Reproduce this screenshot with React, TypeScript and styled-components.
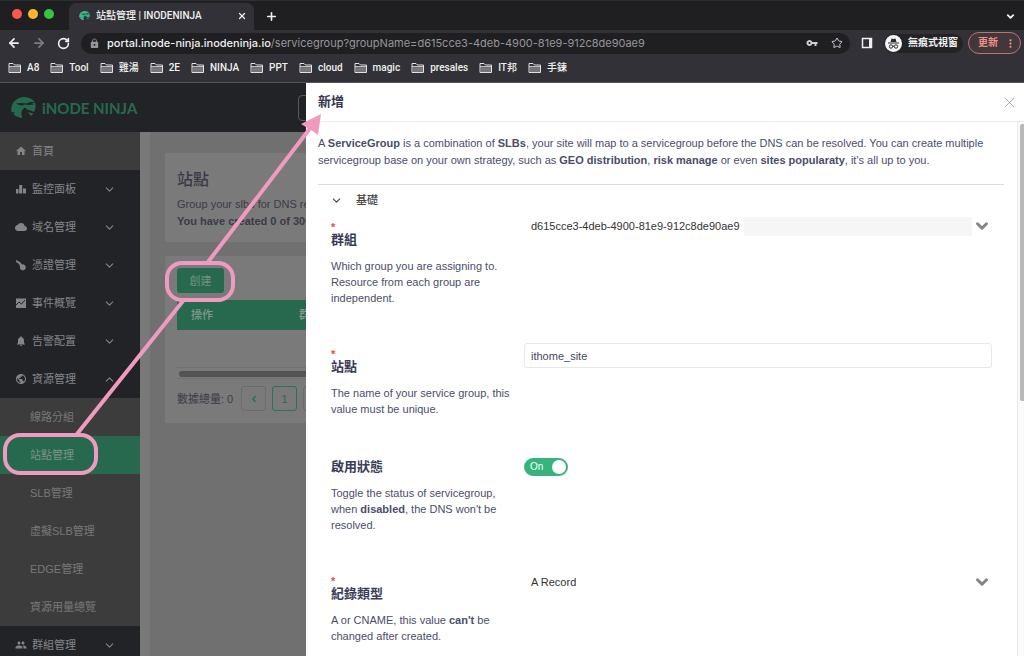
import React from "react";
import styled, { createGlobalStyle, css } from "styled-components";
import { ChevronDown, ChevronUp, ChevronLeft, X, Plus, ArrowLeft, ArrowRight, RotateCw, Star } from "lucide-react";
import {
  MdHome, MdCloud, MdVpnKey, MdNotifications, MdGroup, MdPublic, MdLock, MdMoreVert,
} from "react-icons/md";

const ui = `"Liberation Sans", "Noto Sans CJK TC", sans-serif`;
const chromeFont = `Roboto, "Noto Sans CJK TC", sans-serif`;
const ink = "#4b4d6b";
const pink = "#f19abf";
const green = "#27694f";

const Global = createGlobalStyle`
  * { box-sizing: border-box; }
  body { margin: 0; background: #fff; font: 11px/16px ${ui}; overflow: hidden; }
  button, input, select { font: inherit; color: inherit; margin: 0; padding: 0; border: 0; background: none; }
  a { color: inherit; text-decoration: none; }
  h1, h2, p { margin: 0; }
  svg { display: block; flex: none; }
`;

const Window = styled.div`
  position: relative;
  display: flex;
  flex-direction: column;
  height: calc(100vh - 5px);
  overflow: hidden;
`;

/* Browser chrome */
const TabStrip = styled.div`
  display: flex;
  align-items: center;
  height: 30px;
  padding: 2px 8px 0 12px;
  background: #1f1f21;
  border-top: 1px solid #2e2e30;
  color: #f0f0f0;
  font-family: ${chromeFont};
`;
const Lights = styled.div`
  display: flex;
  gap: 6px;
  width: 57px;
  padding-bottom: 6px;
`;
const Light = styled.span<{ $color: string }>`
  width: 10px;
  height: 10px;
  border-radius: 50%;
  background: ${(p) => p.$color};
`;
const Tab = styled.div`
  display: flex;
  align-items: center;
  align-self: stretch;
  width: 185px;
  padding: 0 7px 2px 10px;
  border-radius: 7px 7px 0 0;
  background: #323137;
  font-size: 10px;
  font-weight: 500;
`;
const TabTitle = styled.span`
  flex: 1;
  padding-left: 6px;
  white-space: nowrap;
`;
const IconButton = styled.button<{ $dim?: boolean }>`
  display: flex;
  align-items: center;
  justify-content: center;
  color: ${(p) => (p.$dim ? "#7c7c80" : "#f0f0f0")};
`;
const NewTab = styled(IconButton)`
  margin: 0 auto 0 11px;
`;
const Toolbar = styled.div`
  display: flex;
  align-items: center;
  height: 26px;
  padding: 0 3px 0 7px;
  gap: 11px;
  background: #323137;
  color: #f0f0f0;
  font-family: ${chromeFont};
`;
const Address = styled.div`
  display: flex;
  flex: 1;
  align-items: center;
  height: 21px;
  padding: 0 7px 0 8px;
  border-radius: 11px;
  background: #1f1f21;
`;
const Url = styled.span`
  flex: 1;
  padding-left: 7px;
  color: #96969a;
  font-family: Inter, sans-serif;
  white-space: nowrap;
  b { color: #f0f0f0; font-weight: 500; }
`;
const AddressIcons = styled.div`
  display: flex;
  align-items: center;
  gap: 13px;
  color: #d0d0d2;
`;
const Incognito = styled.div`
  display: flex;
  align-items: center;
  gap: 6px;
  height: 19px;
  padding: 0 5px 0 1px;
  border-radius: 10px;
  background: #232326;
  font-size: 10px;
  font-weight: 700;
`;
const Update = styled.button`
  display: flex;
  align-items: center;
  gap: 6px;
  height: 22px;
  margin-left: -6px;
  padding: 0 3px 0 9px;
  border: 1px solid #b87572;
  border-radius: 11px;
  background: #42373c;
  color: #ef8f88;
  font-size: 10px;
  font-weight: 700;
`;
const Bookmarks = styled.nav`
  display: flex;
  align-items: center;
  gap: 11px;
  height: 27px;
  padding: 0 8px 3px;
  border-bottom: 1px solid #57575b;
  background: #323137;
  color: #f0f0f0;
  font: 500 10px/16px ${chromeFont};
`;
const Bookmark = styled.a`
  display: flex;
  align-items: center;
  gap: 5px;
`;

/* Portal behind the drawer */
const Portal = styled.div`
  position: relative;
  display: flex;
  flex: 1;
  flex-direction: column;
  min-height: 0;
`;
const PortalHeader = styled.header`
  display: flex;
  align-items: center;
  height: 49px;
  padding-left: 11px;
  background: #222327;
`;
const Brand = styled.a`
  display: flex;
  flex: none;
  align-items: center;
  gap: 6px;
  width: 287px;
  color: ${green};
  font: 700 15px/20px Lato, sans-serif;
`;
const HeaderButton = styled.button`
  width: 80px;
  height: 26px;
  border: 1px solid #58595c;
  border-radius: 4px;
`;
const Columns = styled.div`
  display: flex;
  flex: 1;
  min-height: 0;
`;
const Sidebar = styled.nav`
  width: 140px;
  flex: none;
  background: #222327;
  color: #848587;
  overflow: hidden;
`;
const MenuItem = styled.a<{ $top?: boolean }>`
  display: flex;
  align-items: center;
  gap: 5px;
  height: 38px;
  padding: 0 24px 0 15px;
  ${(p) => p.$top && css`background: #3c3c3c;`}
  span { flex: 1; }
`;
const SubItem = styled.a<{ $active?: boolean }>`
  display: flex;
  align-items: center;
  height: 38px;
  padding-left: 30px;
  background: ${(p) => (p.$active ? green : "#3c3c3c")};
  color: ${(p) => (p.$active ? "#7d9488" : "#787878")};
`;
const Main = styled.main`
  display: flex;
  flex: 1;
  flex-direction: column;
  gap: 14px;
  min-width: 0;
  padding: 21px 15px;
  border-left: 10px solid #797979;
  background: #707070;
  color: #3a3b48;
`;
const Card = styled.section`
  padding: 12px;
  border-radius: 2px;
  background: #7a7a7a;
`;
const IntroCard = styled(Card)`
  height: 89px;
  padding-top: 16px;
  h1 { margin-bottom: 5px; font-size: 16px; line-height: 22px; font-weight: 500; }
  p { line-height: 17px; white-space: nowrap; }
`;
const Create = styled.button`
  display: block;
  width: 47px;
  height: 25px;
  margin-bottom: 7px;
  border-radius: 3px;
  background: ${green};
  color: #72917f;
`;
const Table = styled.table`
  width: 100%;
  border-collapse: collapse;
  th {
    height: 30px;
    padding: 0 14px;
    background: ${green};
    color: #84998d;
    font-weight: 500;
    text-align: left;
  }
  th:first-child { width: 108px; }
  td { height: 37px; }
`;
const HScroll = styled.div`
  height: 12px;
  padding: 3px 2px;
  border: solid #717171;
  border-width: 1px 0;
  &::after { content: ""; display: block; height: 6px; border-radius: 3px; background: #535353; }
`;
const Pager = styled.div`
  display: flex;
  align-items: center;
  gap: 6px;
  margin-top: 7px;
  span { width: 58px; }
`;
const PageButton = styled.button<{ $current?: boolean }>`
  display: flex;
  align-items: center;
  justify-content: center;
  width: 25px;
  height: 25px;
  border: 1px solid ${(p) => (p.$current ? "#2d7257" : "#6b6b6b")};
  border-radius: 3px;
  color: #2d6951;
`;

/* Drawer */
const Drawer = styled.aside`
  position: absolute;
  inset: 0 0 0 306px;
  display: flex;
  flex-direction: column;
  background: #fff;
  color: ${ink};
`;
const DrawerHeader = styled.header`
  display: flex;
  align-items: center;
  justify-content: space-between;
  height: 39px;
  padding: 0 6px 0 12px;
  border-bottom: 1px solid #ececec;
  h2 { color: #34364f; font-size: 13px; font-weight: 700; }
`;
const DrawerBody = styled.div`
  display: flex;
  flex: 1;
  min-height: 0;
`;
const Content = styled.div`
  flex: 1;
  min-width: 0;
  padding: 13px 13px 0 12px;
  overflow: hidden;
`;
const Lead = styled.p`
  padding-bottom: 15px;
  border-bottom: 1px solid #dcdce0;
  line-height: 17px;
`;
const SectionToggle = styled.button`
  display: flex;
  align-items: center;
  gap: 13px;
  height: 30px;
  margin-bottom: 3px;
  padding-left: 12px;
  color: #444;
  font-weight: 500;
`;
const Row = styled.div`
  display: flex;
  padding: 0 12px 39px 13px;
`;
const Caption = styled.div`
  width: 193px;
  flex: none;
  padding: 3px 10px 0 0;
  label { display: block; margin-bottom: 10px; color: #3a3c58; font-size: 13px; font-weight: 700; }
`;
const Required = styled.span`
  display: block;
  height: 11px;
  color: #f04a2c;
  font-weight: 700;
  line-height: 12px;
`;
const Field = styled.div`
  flex: 1;
  min-width: 0;
`;
const SelectBox = styled.div<{ $low?: boolean }>`
  display: flex;
  align-items: center;
  height: 20px;
  margin-top: ${(p) => (p.$low ? "0" : "-2px")};
  padding: 0 1px 0 7px;
  color: #858585;
`;
const Select = styled.select`
  appearance: none;
  field-sizing: content;
  flex: none;
  color: #333;
`;
const Filler = styled.span<{ $shade?: boolean }>`
  flex: 1;
  height: 19px;
  margin: 0 1px 0 4px;
  background: ${(p) => (p.$shade ? "#f6f6f6" : "transparent")};
`;
const TextInput = styled.input`
  display: block;
  width: 100%;
  height: 25px;
  margin-top: -2px;
  padding: 0 6px;
  border: 1px solid #e8e8ea;
  border-radius: 3px;
  color: #45475f;
`;
const Switch = styled.label`
  display: flex;
  align-items: center;
  justify-content: space-between;
  width: 44px;
  height: 18px;
  margin-top: 2px;
  padding: 0 2px 0 6px;
  border-radius: 9px;
  background: #36b47b;
  color: #fff;
  font-size: 10px;
  input {
    appearance: none;
    width: 14px;
    height: 14px;
    border-radius: 50%;
    background: #fff;
  }
`;
const Scrollbar = styled.div`
  width: 7px;
  padding: 2px 0 0 2px;
  border-left: 1px solid #e9e9e9;
  background: #fafafa;
  &::after { content: ""; display: block; height: 52%; border-radius: 2px 0 0 2px; background: #b9b9b9; }
`;
const Annotation = styled.svg`
  position: absolute;
  top: 0;
  left: 0;
  pointer-events: none;
`;

const Folder = () => (
  <svg width="14" height="12" viewBox="0 0 14 12" fill="none" stroke="#e2e2e4">
    <path d="M1 10.5V1.5h4l1.5 1.5H12.5v7.5Z" />
    <path d="M2 5.500h10v4.500H2z" fill="#77777b" stroke="none" />
    <path d="M1 4.700h11.500" />
  </svg>
);
const NinjaMark = ({ width, color, cut }: { width: number; color: string; cut: string }) => (
  <svg width={width} height={(width * 21) / 25} viewBox="0 0 25 21">
    <path fill={color} d="M11.500 21C7 20.500 4 19 2.500 17L4 15.500.5 15C-1 7 5 0 13 0 20 0 25 4 24.500 10c-.2 2.500-1 4-2 5L20 13.500l-3-.5-3-2.500c-4 2.500-4.500 6-2.500 10.500Z" />
    <path fill={color} d="m17 15 5.500 1.500-2.500 2.500Z" />
    <path fill={cut} d="m5 6.500 5-.5 5 .5 5-1.500 4 .3-3 1.200 2 1-5 .5-4-.5-3 1-3-.5Z" />
  </svg>
);
const IncognitoMark = () => (
  <svg width="17" height="17" viewBox="0 0 17 17">
    <circle cx="8.500" cy="8.500" r="8.500" fill="#f5f5f5" />
    <path fill="#2b2b2e" d="M5.500 7 6.500 3.500l2 .5 2-.5 1 3.500ZM3 7.500h11v1H3z" />
    <g fill="none" stroke="#2b2b2e">
      <circle cx="6" cy="11.500" r="1.700" /><circle cx="11" cy="11.500" r="1.700" /><path d="M7.700 11.200h1.600" />
    </g>
  </svg>
);
const Bars = () => (
  <svg width="12" height="12" viewBox="0 0 12 12" fill="currentColor"><path d="M1 6h2.500v4.500H1zM4.200 2h3v8.500h-3zM8 5.500h3v5H8z" /></svg>
);
const Tool = () => (
  <svg width="12" height="12" viewBox="0 0 12 12" fill="currentColor"><path d="m1 1 4 2 2 2.500a3 3 0 1 1-2 2L4 5 1 3Z" /></svg>
);
const Chart = () => (
  <svg width="12" height="12" viewBox="0 0 12 12"><rect x="1" y="1.500" width="10" height="9.500" fill="currentColor" /><path d="m1 8 3-3 2.500 2L10 3" stroke="#222327" fill="none" /></svg>
);

const bookmarks = ["A8", "Tool", "雞湯", "2E", "NINJA", "PPT", "cloud", "magic", "presales", "IT邦", "手鍊"];
const menu = [
  { label: "監控面板", icon: <Bars /> },
  { label: "域名管理", icon: <MdCloud size={12} /> },
  { label: "憑證管理", icon: <Tool /> },
  { label: "事件概覽", icon: <Chart /> },
  { label: "告警配置", icon: <MdNotifications size={12} /> },
  { label: "資源管理", icon: <MdPublic size={12} />, open: true },
];
const resources = ["線路分組", "站點管理", "SLB管理", "虛擬SLB管理", "EDGE管理", "資源用量總覽"];

export default function App() {
  return (
    <>
      <Global />
      <Window>
        <TabStrip>
          <Lights>
            <Light $color="#fc5750" /><Light $color="#fdb52b" /><Light $color="#33c640" />
          </Lights>
          <Tab>
            <NinjaMark width={11} color="#35b887" cut="#323137" />
            <TabTitle>站點管理 | INODENINJA</TabTitle>
            <IconButton aria-label="Close tab"><X size={10} strokeWidth={3} /></IconButton>
          </Tab>
          <NewTab aria-label="New tab"><Plus size={13} strokeWidth={3} /></NewTab>
          <IconButton aria-label="Search tabs"><ChevronDown size={11} strokeWidth={4} /></IconButton>
        </TabStrip>
        <Toolbar>
          <IconButton aria-label="Back"><ArrowLeft size={14} strokeWidth={3} /></IconButton>
          <IconButton aria-label="Forward" $dim><ArrowRight size={14} strokeWidth={3} /></IconButton>
          <IconButton aria-label="Reload"><RotateCw size={13} strokeWidth={3} /></IconButton>
          <Address>
            <MdLock size={11} color="#96969a" />
            <Url><b>portal.inode-ninja.inodeninja.io</b>/servicegroup?groupName=d615cce3-4deb-4900-81e9-912c8de90ae9</Url>
            <AddressIcons><MdVpnKey size={12} /><Star size={12} /></AddressIcons>
          </Address>
          <svg width="12" height="12" viewBox="0 0 12 12"><path d="M1.500 1.500h9v9h-9z" fill="none" stroke="#f0f0f0" strokeWidth="1.500" /><path d="M8 1h3v10H8z" fill="#f0f0f0" /></svg>
          <Incognito><IncognitoMark />無痕式視窗</Incognito>
          <Update>更新<MdMoreVert size={13} /></Update>
        </Toolbar>
        <Bookmarks>
          {bookmarks.map((b) => <Bookmark href="#" key={b}><Folder />{b}</Bookmark>)}
        </Bookmarks>

        <Portal>
          <PortalHeader>
            <Brand href="#"><NinjaMark width={25} color={green} cut="#222327" />iNODE NINJA</Brand>
            <HeaderButton aria-label="Language" />
          </PortalHeader>
          <Columns>
            <Sidebar>
              <MenuItem href="#" $top><MdHome size={12} /><span>首頁</span></MenuItem>
              {menu.map((m) => (
                <MenuItem href="#" key={m.label}>
                  {m.icon}<span>{m.label}</span>
                  {m.open ? <ChevronUp size={13} /> : <ChevronDown size={13} />}
                </MenuItem>
              ))}
              {resources.map((r) => <SubItem href="#" key={r} $active={r === "站點管理"}>{r}</SubItem>)}
              <MenuItem href="#"><MdGroup size={12} /><span>群組管理</span><ChevronDown size={13} /></MenuItem>
            </Sidebar>
            <Main>
              <IntroCard>
                <h1>站點</h1>
                <p>Group your slbs for DNS resolving.</p>
                <p><b>You have created 0 of 300</b></p>
              </IntroCard>
              <Card>
                <Create>創建</Create>
                <Table>
                  <thead><tr><th>操作</th><th>群組</th></tr></thead>
                  <tbody><tr><td /><td /></tr></tbody>
                </Table>
                <HScroll />
                <Pager>
                  <span>數據總量: 0</span>
                  <PageButton aria-label="Previous"><ChevronLeft size={10} strokeWidth={3} /></PageButton>
                  <PageButton $current>1</PageButton>
                  <PageButton aria-label="Next" />
                </Pager>
              </Card>
            </Main>
          </Columns>

          <Drawer>
            <DrawerHeader>
              <h2>新增</h2>
              <IconButton aria-label="Close" $dim><X size={17} strokeWidth={1} color="#888" /></IconButton>
            </DrawerHeader>
            <DrawerBody>
              <Content>
                <Lead>
                  A <b>ServiceGroup</b> is a combination of <b>SLBs</b>, your site will map to a servicegroup before the DNS can be resolved. You can create multiple servicegroup base on your own strategy, such as <b>GEO distribution</b>, <b>risk manage</b> or even <b>sites popularaty</b>, it's all up to you.
                </Lead>
                <SectionToggle><ChevronDown size={13} />基礎</SectionToggle>
                <Row>
                  <Caption>
                    <Required>*</Required>
                    <label htmlFor="group">群組</label>
                    <p>Which group you are assigning to. Resource from each group are independent.</p>
                  </Caption>
                  <Field>
                    <SelectBox>
                      <Select id="group"><option>d615cce3-4deb-4900-81e9-912c8de90ae9</option></Select>
                      <Filler $shade />
                      <ChevronDown size={18} strokeWidth={4} />
                    </SelectBox>
                  </Field>
                </Row>
                <Row>
                  <Caption>
                    <Required>*</Required>
                    <label htmlFor="site">站點</label>
                    <p>The name of your service group, this value must be unique.</p>
                  </Caption>
                  <Field><TextInput id="site" defaultValue="ithome_site" /></Field>
                </Row>
                <Row>
                  <Caption>
                    <label htmlFor="enabled">啟用狀態</label>
                    <p>Toggle the status of servicegroup, when <b>disabled</b>, the DNS won't be resolved.</p>
                  </Caption>
                  <Field><Switch>On<input id="enabled" type="checkbox" role="switch" defaultChecked /></Switch></Field>
                </Row>
                <Row>
                  <Caption>
                    <Required>*</Required>
                    <label htmlFor="record">紀錄類型</label>
                    <p>A or CNAME, this value <b>can't</b> be changed after created.</p>
                  </Caption>
                  <Field>
                    <SelectBox $low>
                      <Select id="record"><option>A Record</option></Select>
                      <Filler />
                      <ChevronDown size={18} strokeWidth={4} />
                    </SelectBox>
                  </Field>
                </Row>
              </Content>
              <Scrollbar />
            </DrawerBody>
          </Drawer>
        </Portal>

        <Annotation width="340" height="500" viewBox="0 0 340 500" fill="none" stroke={pink} strokeWidth="4">
          <rect x="5" y="435" width="91" height="38" rx="15" />
          <rect x="167" y="263" width="66" height="37" rx="15" />
          <path d="M77 434 183 301M208 262 311 127" />
          <path d="m321 114-20 10 8 5 1 0 8 6Z" fill={pink} stroke="none" />
        </Annotation>
      </Window>
    </>
  );
}
